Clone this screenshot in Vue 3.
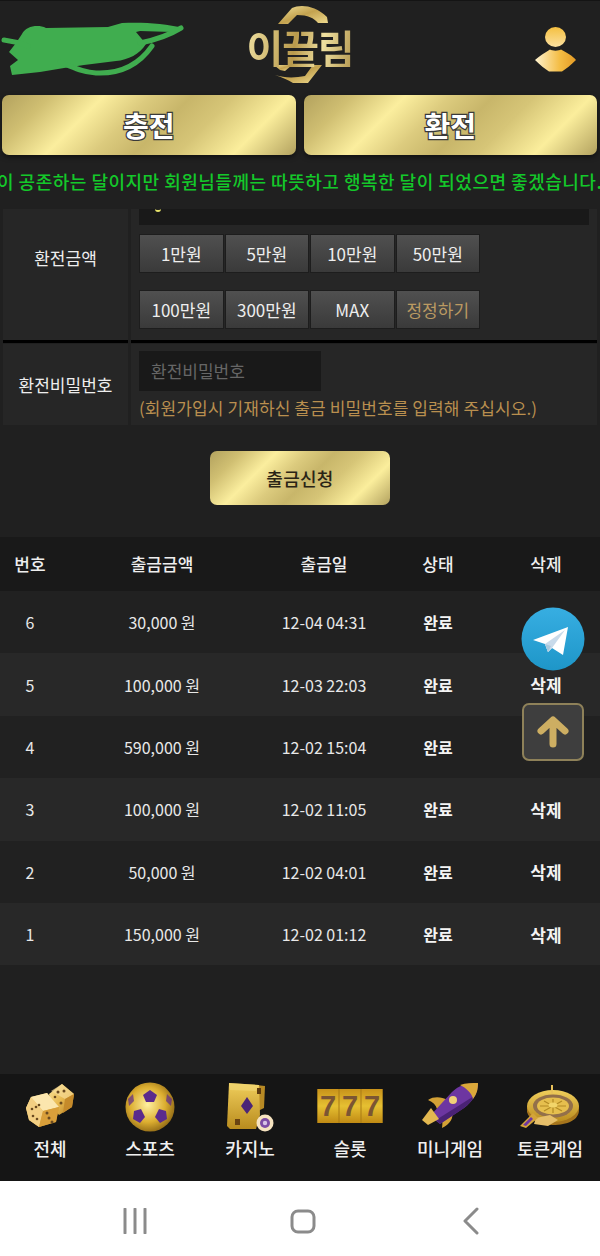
<script setup>
const amountRows = [
  ['1만원', '5만원', '10만원', '50만원'],
  ['100만원', '300만원', 'MAX', '정정하기']
]
const rows = [
  { id: 6, amount: '30,000 원', date: '12-04 04:31' },
  { id: 5, amount: '100,000 원', date: '12-03 22:03' },
  { id: 4, amount: '590,000 원', date: '12-02 15:04' },
  { id: 3, amount: '100,000 원', date: '12-02 11:05' },
  { id: 2, amount: '50,000 원', date: '12-02 04:01' },
  { id: 1, amount: '150,000 원', date: '12-02 01:12' }
]
</script>

<template>
  <div class="app">
    <svg width="0" height="0" class="defs">
      <defs>
        <linearGradient id="g1" x1="0" y1="0" x2="1" y2="1">
          <stop offset="0" stop-color="#fbe7a0" />
          <stop offset=".5" stop-color="#e8b94f" />
          <stop offset="1" stop-color="#b07a22" />
        </linearGradient>
        <radialGradient id="g2" cx=".45" cy=".45" r=".6">
          <stop offset="0" stop-color="#fff0a0" />
          <stop offset=".6" stop-color="#dcae30" />
          <stop offset="1" stop-color="#8a6414" />
        </radialGradient>
        <linearGradient id="g3" x1="0" y1="0" x2="0" y2="1">
          <stop offset="0" stop-color="#f0ce5c" />
          <stop offset="1" stop-color="#b98c1e" />
        </linearGradient>
        <linearGradient id="logoArc" x1="0" y1="0" x2="1" y2="1">
          <stop offset="0" stop-color="#f2e29a" />
          <stop offset=".5" stop-color="#c3a24f" />
          <stop offset="1" stop-color="#f0dc90" />
        </linearGradient>
        <linearGradient id="personBody" x1="0" y1="0" x2="1" y2="0">
          <stop offset="0" stop-color="#fff3cf" />
          <stop offset=".6" stop-color="#f4bd45" />
          <stop offset="1" stop-color="#e39a24" />
        </linearGradient>
        <linearGradient id="personHead" x1="0" y1="0" x2="0" y2="1">
          <stop offset="0" stop-color="#f5c040" />
          <stop offset="1" stop-color="#fbe0a0" />
        </linearGradient>
        <linearGradient id="tg" x1="0" y1="0" x2="0" y2="1">
          <stop offset="0" stop-color="#37aee2" />
          <stop offset="1" stop-color="#1e96c8" />
        </linearGradient>
      </defs>
    </svg>

    <header class="header">
      <svg class="scribble" viewBox="0 0 190 70" width="190" height="70">
        <path fill="#40ad4f" d="M22 24C26 16 38 14 46 18L108 17L122 13C140 12 165 13 183 18L172 22L140 21L136 22L146 34C140 44 128 50 116 51L84 55L64 58L40 62L12 65L10 56L18 50L9 42L16 33Z" />
        <path fill="none" stroke="#40ad4f" stroke-width="5" stroke-linecap="round" d="M4 30C12 31 20 33 28 36M181 18C168 26 155 30 140 33M152 36C138 56 118 64 96 63C82 62 72 57 60 52" />
      </svg>
      <div class="logo">
        <svg class="logo-ring" viewBox="248 1 104 94" width="104" height="94">
          <path fill="url(#logoArc)" d="M278 24L292 8C300 4 315 5 327 17L328 23L318 23C314 18 308 15 297 15L288 24Z" />
          <path fill="url(#logoArc)" d="M275 75C282 77 288 80 293 83H308L322 65H313L305 76C295 78 284 78 275 75Z" />
          <path fill="url(#logoArc)" d="M274 65H292L285 71L280 70Z" />
        </svg>
        <span class="logo-text">이끌림</span>
      </div>
      <svg class="person" viewBox="0 0 42 45" width="42" height="45">
        <ellipse cx="20.500" cy="10" rx="10.500" ry="10" fill="url(#personHead)" />
        <path fill="url(#personBody)" d="M15 22.500C17 24 24 24 26 22.500C32 26 38 29 41 33C36 38 31 42 27 44.500H14C10 42 5 38 0 33C4 29 10 26 15 22.500Z" />
      </svg>
    </header>

    <div class="actions">
      <button class="gold action">충전</button>
      <button class="gold action">환전</button>
    </div>

    <div class="notice"><p>이 공존하는 달이지만 회원님들께는 따뜻하고 행복한 달이 되었으면 좋겠습니다.</p></div>

    <section class="form">
      <div class="form-label first">환전금액</div>
      <div class="form-field first">
        <div class="clipped-input"><i class="clipped-glyph"></i></div>
        <div class="amounts">
          <button v-for="label in amountRows[0]" :key="label" class="amount">{{ label }}</button>
        </div>
        <div class="amounts second">
          <button
            v-for="label in amountRows[1]"
            :key="label"
            class="amount"
            :class="{ reset: label === '정정하기' }"
          >{{ label }}</button>
        </div>
      </div>
      <div class="divider"></div>
      <div class="divider"></div>
      <div class="form-label">환전비밀번호</div>
      <div class="form-field pw">
        <div class="pw-input">환전비밀번호</div>
        <p class="hint">(회원가입시 기재하신 출금 비밀번호를 입력해 주십시오.)</p>
      </div>
    </section>

    <div class="submit-wrap">
      <button class="gold submit">출금신청</button>
    </div>

    <table class="list">
      <colgroup>
        <col class="c1" /><col class="c2" /><col class="c3" /><col class="c4" /><col class="c5" />
      </colgroup>
      <thead>
        <tr>
          <th>번호</th><th>출금금액</th><th>출금일</th><th>상태</th><th>삭제</th>
        </tr>
      </thead>
      <tbody>
        <tr v-for="row in rows" :key="row.id">
          <td>{{ row.id }}</td>
          <td>{{ row.amount }}</td>
          <td>{{ row.date }}</td>
          <td class="strong">완료</td>
          <td class="strong del">삭제</td>
        </tr>
      </tbody>
    </table>

    <nav class="games">
      <div class="game">
        <svg viewBox="0 0 50 46" width="50" height="46">
          <path fill="url(#g1)" d="M24 12L37 2L49 12L47 25L34 33L26 24Z" />
          <path fill="#f7dc97" d="M37 2L49 12L40 17L26 9Z" opacity=".7" />
          <path fill="#c58a2a" d="M40 17L49 12L47 25L38 31Z" />
          <path fill="url(#g1)" d="M1 26L6 15L22 11L34 25L31 40L14 45L4 38Z" />
          <path fill="#fbe6ae" d="M6 15L22 11L34 25L18 29Z" />
          <path fill="#f3cf83" d="M1 26L6 15L18 29L14 45L4 38Z" />
          <path fill="#d99f3a" d="M18 29L34 25L31 40L14 45Z" />
          <g fill="#6a4a20">
            <circle cx="7" cy="27" r="1.300" /><circle cx="11" cy="25" r="1.300" /><circle cx="14" cy="23" r="1.300" />
            <circle cx="8" cy="34" r="1.300" /><circle cx="12" cy="37" r="1.300" />
            <circle cx="22" cy="31" r="1.500" /><circle cx="24" cy="36" r="1.500" /><circle cx="27" cy="40" r="1.500" />
            <circle cx="33" cy="10" r="1.500" /><circle cx="39" cy="9" r="1.500" /><circle cx="36" cy="21" r="1.500" /><circle cx="30" cy="15" r="1.300" />
          </g>
        </svg>
        <span>전체</span>
      </div>
      <div class="game">
        <svg viewBox="0 0 50 50" width="50" height="50">
          <circle cx="25" cy="25" r="24.500" fill="url(#g2)" />
          <g fill="#5b2a8c">
            <path d="M25 8L32 13L29 20H21L18 13Z" />
            <path d="M9 29L16 27L20 35L15 41L8 37Z" />
            <path d="M41 29L34 27L30 35L35 41L42 37Z" />
            <path d="M3 17L8 12L9 19L4 24Z" opacity=".7" />
            <path d="M47 17L42 12L41 19L46 24Z" opacity=".7" />
          </g>
        </svg>
        <span>스포츠</span>
      </div>
      <div class="game">
        <svg viewBox="0 0 48 50" width="48" height="50">
          <path fill="#b88a24" d="M30 3L39 4L38 26L30 30Z" />
          <path fill="url(#g3)" d="M3 1L33 3L34 33L30 47H4L1 44Z" />
          <path fill="#f2d878" d="M3 1L33 3L30 9L4 8Z" opacity=".6" />
          <path fill="#4b2577" d="M21 15L27 24L21 32L15 24Z" />
          <rect x="31" y="6" width="4" height="6" fill="#5c3a10" />
          <rect x="9" y="37" width="5" height="6" fill="#6a4412" />
          <circle cx="39" cy="41" r="8.500" fill="#f6e3c0" />
          <circle cx="39" cy="41" r="5" fill="#7d4ba5" />
          <circle cx="39" cy="41" r="2.200" fill="#d8c2e6" />
        </svg>
        <span>카지노</span>
      </div>
      <div class="game">
        <div class="slots"><b>7</b><b>7</b><b>7</b></div>
        <span>슬롯</span>
      </div>
      <div class="game">
        <svg viewBox="0 0 56 46" width="56" height="46">
          <path fill="#d3a136" d="M6 18C12 14 20 15 25 18L15 27C14 23 11 20 6 18Z" />
          <path fill="#d3a136" d="M30 29C32 36 28 42 20 46C21 40 20 36 18 32Z" />
          <path fill="#6d36a1" d="M8 34L30 10C36 4 44 1 56 1C56 12 50 20 42 26L18 42Z" />
          <path fill="#4a2275" d="M18 42L42 26C46 23 50 19 52 14L14 38Z" />
          <path fill="#dba83a" d="M38 3C44 1 50 1 56 1C56 7 55 12 51 17C50 11 44 6 38 3Z" />
          <circle cx="31" cy="18" r="4" fill="#f0d078" />
          <path fill="#e3b850" d="M0 38L9 26L17 37L6 43Z" />
        </svg>
        <span>미니게임</span>
      </div>
      <div class="game">
        <svg viewBox="0 0 60 46" width="60" height="46">
          <path fill="#a5741c" d="M7 24V30C9 38 20 43 33 43C47 43 59 38 59 28V24Z" />
          <ellipse cx="33" cy="24" rx="26" ry="16" fill="url(#g3)" />
          <ellipse cx="33" cy="24" rx="20" ry="11.500" fill="#93704a" />
          <ellipse cx="33" cy="24" rx="16" ry="8.500" fill="#e6bf4e" />
          <path d="M20 24H46M33 17V31M24 19L42 29M42 19L24 29" stroke="#b28a24" stroke-width="1.200" />
          <ellipse cx="33" cy="23" rx="4.500" ry="2.600" fill="#f2d56a" />
          <rect x="31" y="3" width="2" height="9" fill="#e8c15a" />
          <path fill="#e6bf6a" d="M16 36L30 33L38 38L28 44L14 42Z" />
          <path fill="#d4a43a" d="M0 44L13 31L18 36L6 46Z" />
          <path fill="#6d36a1" d="M3 43L11 35L13 37L6 44Z" />
        </svg>
        <span>토큰게임</span>
      </div>
    </nav>

    <div class="system-nav">
      <svg viewBox="0 0 24 26" width="24" height="26" class="sys">
        <path d="M2 1V25M12 1V25M22 1V25" />
      </svg>
      <svg viewBox="0 0 26 26" width="26" height="26" class="sys">
        <rect x="2" y="3" width="22" height="21" rx="6" />
      </svg>
      <svg viewBox="0 0 18 28" width="18" height="28" class="sys">
        <path d="M15 2L3 14L15 26" />
      </svg>
    </div>

    <a class="float telegram">
      <svg viewBox="0 0 64 64" width="64" height="64">
        <circle cx="32" cy="32" r="31.500" fill="url(#tg)" />
        <path fill="#fff" d="M12 33L47 20L42 48L31 41L27 45L24 37Z" />
        <path fill="#c8daea" d="M24 37L44 23L31 41L27 45Z" />
        <path fill="#a9c9dd" d="M24 37L27 45L30 39Z" />
      </svg>
    </a>
    <a class="float top">
      <svg viewBox="0 0 34 32" width="34" height="32">
        <path fill="none" stroke="#cdae62" stroke-width="7" stroke-linecap="round" stroke-linejoin="round" d="M17 28V5M5 15L17 4L29 15" />
      </svg>
    </a>
  </div>
</template>

<style>
html, body { margin: 0; background: #202020; }
</style>

<style scoped>
.app {
  position: relative;
  width: 600px;
  height: 1256px;
  overflow: hidden;
  display: flex;
  flex-direction: column;
  background: #202020;
  color: #eee;
  font-family: "Noto Sans CJK KR", "Noto Sans", sans-serif;
}
.defs { position: absolute; }
button { font-family: inherit; padding: 0; cursor: pointer; }
p { margin: 0; }

.header {
  height: 94px;
  border-top: 1px solid #141414;
  position: relative;
  display: flex;
  align-items: center;
  justify-content: center;
  flex: none;
}
.scribble { position: absolute; left: 0; top: 9px; }
.logo { position: relative; width: 104px; height: 94px; display: flex; align-items: center; justify-content: center; }
.logo-ring { position: absolute; left: 0; top: 0; }
.logo-text {
  position: relative;
  font-size: 40px;
  font-weight: 700;
  line-height: 1;
  letter-spacing: -1.200px;
  white-space: nowrap;
  transform: translateY(-1px);
  background: linear-gradient(100deg, #efe0a0, #b99a4c 45%, #efe0a0 70%, #b3974f);
  -webkit-background-clip: text;
  background-clip: text;
  color: transparent;
}
.person { position: absolute; left: 535px; top: 26px; }

.gold {
  background: linear-gradient(135deg, #b3a25e 0%, #d0bf72 14%, #fbee9e 29%, #dccb7e 42%, #c8b66a 54%, #d6c577 66%, #fbee9c 82%, #b3a25f 100%);
  border: 0;
  border-radius: 7px;
}
.actions {
  height: 60px;
  flex: none;
  display: flex;
  gap: 8px;
  padding: 0 3px 0 2px;
}
.action {
  flex: 1;
  box-shadow: 0 2px 5px rgba(0, 0, 0, .5);
  font-size: 28px;
  font-weight: 700;
  color: #fff;
  -webkit-text-stroke: 2.500px #3a3a3a;
  paint-order: stroke fill;
}

.notice {
  height: 54px;
  flex: none;
  display: flex;
  align-items: center;
  overflow: hidden;
  padding-bottom: 3px;
  box-sizing: border-box;
}
.notice p {
  margin-left: -3px;
  white-space: nowrap;
  font-size: 18px;
  font-weight: 500;
  letter-spacing: .5px;
  color: #14c82a;
}

.form {
  flex: none;
  display: grid;
  grid-template-columns: 125px 466px;
  column-gap: 3px;
  padding-left: 3px;
}
.form-label {
  background: #262626;
  display: flex;
  align-items: center;
  justify-content: center;
  font-size: 17px;
  color: #eee;
  box-sizing: border-box;
}
.form-label.first { height: 131px; padding-bottom: 34px; }
.form-field { background: #262626; padding-left: 8px; box-sizing: border-box; }
.form-field.first { height: 131px; }
.clipped-input {
  position: relative;
  width: 450px;
  height: 16px;
  background: #191919;
}
.clipped-glyph {
  position: absolute;
  left: 16px;
  top: 0;
  width: 6px;
  height: 3px;
  border-bottom: 2px solid #e6e26a;
  border-radius: 0 0 4px 4px;
  box-sizing: border-box;
}
.amounts { display: flex; gap: 1px; margin-top: 9px; }
.amounts.second { margin-top: 17px; }
.amount {
  width: 84.500px;
  height: 39px;
  background: linear-gradient(#505050, #3a3a3a);
  border: 1px solid #1d1d1d;
  color: #eee;
  font-size: 17px;
  line-height: 1;
}
.amount.reset { color: #bb9a62; }
.divider { height: 4px; background: linear-gradient(#000 75%, #202020 75%); }
.form-field.pw { height: 81px; padding-top: 7px; }
.pw-input {
  width: 182px;
  height: 40px;
  background: #191919;
  color: #666;
  font-size: 17px;
  line-height: 40px;
  padding-left: 12px;
  box-sizing: border-box;
}
.hint {
  margin-top: 5px;
  font-size: 17px;
  line-height: 24px;
  letter-spacing: .1px;
  color: #b98f4f;
  white-space: nowrap;
}

.submit-wrap {
  flex: none;
  height: 112px;
  display: flex;
  justify-content: center;
  padding-top: 26px;
  box-sizing: border-box;
}
.submit {
  width: 180px;
  height: 54px;
  font-size: 18px;
  font-weight: 500;
  letter-spacing: .3px;
  color: #2a2416;
}

.list {
  flex: none;
  width: 600px;
  table-layout: fixed;
  border-collapse: collapse;
}
.c1 { width: 60px; }
.c2 { width: 204px; }
.c3 { width: 120px; }
.c4 { width: 108px; }
.c5 { width: 108px; }
.list th {
  height: 54px;
  padding: 0 0 2px;
  box-sizing: border-box;
  background: #191919;
  font-size: 17px;
  font-weight: 500;
  color: #eee;
}
.list td {
  height: 62.400px;
  padding: 0;
  text-align: center;
  font-size: 16px;
  color: #e8e8e8;
}
.list tbody tr:nth-child(odd) { background: #212121; }
.list tbody tr:nth-child(even) { background: #282828; }
.list td.strong { font-weight: 700; color: #f4f4f4; }
.list td.del { font-size: 17px; }

.games {
  margin-top: auto;
  height: 107px;
  flex: none;
  background: #151515;
  display: grid;
  grid-template-columns: repeat(6, 100px);
}
.game {
  display: flex;
  flex-direction: column;
  align-items: center;
  position: relative;
}
.game svg, .slots {
  position: absolute;
  left: 50%;
  top: 8px;
  transform: translateX(-50%);
}
.game span {
  margin-top: 59px;
  font-size: 18px;
  line-height: 30px;
  font-weight: 500;
  color: #f0f0f0;
  white-space: nowrap;
}
.slots {
  top: 15px;
  width: 65px;
  height: 34px;
  display: grid;
  grid-template-columns: repeat(3, 1fr);
  gap: 1px;
  background: #a87a14;
}
.slots b {
  display: flex;
  align-items: center;
  justify-content: center;
  background: linear-gradient(#c8921a, #e6c032 50%, #c08a14);
  color: #7b5533;
  font-size: 29px;
  font-weight: 700;
  line-height: 1;
  font-family: "Liberation Sans", sans-serif;
}

.system-nav {
  flex: none;
  height: 75px;
  background: #fff;
  display: grid;
  grid-template-columns: repeat(3, 168px);
  justify-items: center;
  align-items: center;
  padding: 5px 0 0 51px;
  box-sizing: border-box;
}
.sys { fill: none; stroke: #8b8b8b; stroke-width: 3; stroke-linecap: round; stroke-linejoin: round; }

.float { position: absolute; display: block; }
.telegram { left: 521px; top: 607px; width: 64px; height: 64px; }
.top {
  left: 522px;
  top: 703px;
  width: 62px;
  height: 58px;
  box-sizing: border-box;
  border: 2px solid #8e8159;
  border-radius: 7px;
  background: #3e3e3e;
  display: flex;
  align-items: center;
  justify-content: center;
}
</style>
